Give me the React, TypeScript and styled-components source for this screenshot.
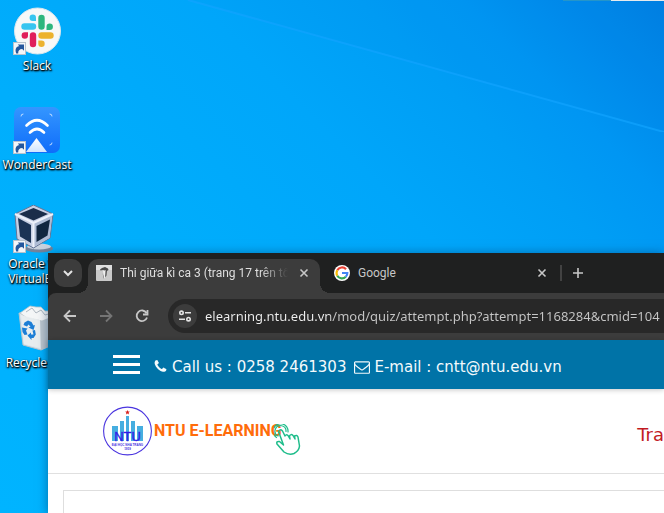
import React from "react";
import styled, { createGlobalStyle } from "styled-components";

const GlobalStyle = createGlobalStyle`
  *, *::before, *::after { box-sizing: border-box; }
  body { margin: 0; overflow: hidden; }
  button, input { font: inherit; border: 0; padding: 0; margin: 0; color: inherit; }
  svg { display: block; flex: none; }
`;

const uiFont = `"Open Sans", "Noto Sans", sans-serif`;

/* ---------- desktop ---------- */

const Desktop = styled.main`
  position: relative;
  min-height: 100vh;
  overflow: hidden;
  font-family: ${uiFont};
  background: linear-gradient(
    45deg,
    #00b4ff 0%,
    #00aefc 36%,
    #00a6fa 60%,
    #009ef5 74%,
    #0096f3 83%,
    #007fe2 100%
  );
`;

const Ray = styled.svg`
  position: absolute;
  top: 0;
  left: 0;
  width: 100%;
  height: 132px;
`;

const ScreenEdge = styled.div`
  position: absolute;
  top: 0;
  right: 0;
  width: 101px;
  height: 1px;
  background: linear-gradient(to right, #2595c9 48px, #e6eaed 48px);
`;

const IconColumn = styled.nav`
  position: relative;
  display: grid;
  width: 74px;
  padding-top: 7px;
  grid-auto-rows: 99px;
`;

const Shortcut = styled.button`
  display: flex;
  flex-direction: column;
  align-items: center;
  justify-content: flex-start;
  gap: 3px;
  background: none;
  color: #fff;
  font-size: 12px;
  line-height: 15px;
  text-shadow: 0 1px 2px #000, 1px 1px 2px #000, 1px 1px 1px rgba(0, 0, 0, 0.7);
`;

const ShortcutLabel = styled.span`
  white-space: pre;
`;

const LinkArrow = () => (
  <g>
    <rect x="0.500" y="35.500" width="12" height="12" fill="#f4f6f8" stroke="#b8c2cc" strokeWidth="1" />
    <path d="M3.200 46.500C1.500 42 3.500 39.300 6.300 39.300L4.800 37.500H11V43.700L9.200 42C6.500 42 5 43.500 5.200 46.500z" fill="#24579d" />
  </g>
);

const SlackIcon = () => (
  <svg width="48" height="48" viewBox="0 0 48 48">
    <circle cx="24.500" cy="24" r="23" fill="#f7f8f8" stroke="#d9e6ee" />
    <g strokeWidth="6.400" strokeLinecap="round" fill="none">
      <path d="M11.500 19.500h8.500" stroke="#36c5f0" />
      <path d="M28.500 11v8.500" stroke="#2eb67d" />
      <path d="M28.500 28.500h9" stroke="#ecb22e" />
      <path d="M20 28.500v8.500" stroke="#e01e5a" />
    </g>
    <path d="M23 14h-3.200a3.200 3.200 0 1 1 3.200-3.200z" fill="#36c5f0" />
    <path d="M33.500 23v-3.200a3.200 3.200 0 1 1 3.200 3.200z" fill="#2eb67d" />
    <path d="M25.300 33.500h3.200a3.200 3.200 0 1 1-3.200 3.200z" fill="#ecb22e" />
    <path d="M15 25.300v3.200a3.200 3.200 0 1 1-3.200-3.200z" fill="#e01e5a" />
    <LinkArrow />
  </svg>
);

const CastIcon = () => (
  <svg width="48" height="48" viewBox="0 0 48 48">
    <defs>
      <linearGradient id="castBg" x1="0" y1="0" x2="0" y2="1">
        <stop offset="0" stopColor="#3496ff" />
        <stop offset="1" stopColor="#0f6dfa" />
      </linearGradient>
      <linearGradient id="castBeam" x1="0" y1="0" x2="0" y2="1">
        <stop offset="0" stopColor="#fff" />
        <stop offset="1" stopColor="#cfe4ff" />
      </linearGradient>
    </defs>
    <rect x="1" y="1" width="46" height="46" rx="7" fill="url(#castBg)" />
    <g fill="none" stroke="#fff" strokeLinecap="round">
      <path d="M13.500 19.500Q24 9 34.500 19.500" strokeWidth="2.600" />
      <path d="M17 26.500Q24 19.500 31 26.500" strokeWidth="2.600" />
      <path d="M8 10q0-2 2-2M37 8q2 0 2 2M37 39q2 0 2-2" strokeWidth="1" opacity=".7" />
    </g>
    <path d="M23.500 32L34 46H13z" fill="url(#castBeam)" />
    <LinkArrow />
  </svg>
);

const CubeIcon = () => (
  <svg width="48" height="48" viewBox="0 0 48 48">
    <ellipse cx="26" cy="43.500" rx="14" ry="4" fill="#74839a" />
    <ellipse cx="26" cy="41.500" rx="12" ry="3" fill="#c9d2de" />
    <path d="M20.500 0L40 9L37 33L20.500 43L4 34L2 9z" fill="#c8d0e4" stroke="#647597" />
    <path d="M20.500 19L39 10L36.500 33L20.500 42z" fill="#adbbd4" />
    <path d="M20.500 3L35 9L20.500 15.500L6 9z" fill="#1b2d49" />
    <path d="M5 13L18 20V38L7 31.500z" fill="#1b3355" />
    <path d="M23.500 21L37 14.500L34.500 30.500L23.500 37z" fill="#10263f" />
    <path d="M2 9L20.500 18L40 9M20.500 18V42" fill="none" stroke="#edf1fa" strokeWidth="2" />
    <LinkArrow />
  </svg>
);

const BinIcon = () => (
  <svg width="48" height="48" viewBox="0 0 48 48">
    <path d="M6 9L42 9L37 42L28 46L10 41z" fill="#dce4ea" stroke="#b5c5cf" />
    <path d="M27 14L42 9L37 42L28 46z" fill="#bcc6ce" />
    <path d="M7 9l10-7 6 1 5 0 4 4 7 0 3 5-13 5-15-3z" fill="#f4f6f7" stroke="#b8c1c8" strokeWidth=".8" />
    <path d="M13 8l6-4 4 5 5-3 4 5 7-2" fill="none" stroke="#aeb8c1" />
    <path d="M8 11l19 5v28l-16-4z" fill="#e9edf0" opacity=".9" />
    <g fill="#1c7ed6">
      <path d="M11.500 18.500L15 16.500L18.500 18L20.500 21.500L22 21L20.500 26L15.500 23.500L17.500 22.700L15.500 20.500L14 22.500L10.500 21z" />
      <path d="M9 23.500L14.500 24.500L13 26.500L14.500 30.500L11.500 31L9.500 28z" />
      <path d="M19.500 26.500L22 26L22.800 30.500L20.500 34H18.500V36L14.500 31.500L18 28.500V30.500H20.500z" />
    </g>
  </svg>
);

const shortcuts = [
  { label: "Slack", Icon: SlackIcon },
  { label: "WonderCast", Icon: CastIcon },
  { label: "Oracle VM\nVirtualBox", Icon: CubeIcon },
  { label: "Recycle Bin", Icon: BinIcon },
];

/* ---------- browser window ---------- */

const Window = styled.section`
  position: absolute;
  top: 253px;
  left: 48px;
  right: 0;
  bottom: 0;
  display: flex;
  flex-direction: column;
  background: #fff;
  box-shadow: 0 1px 10px rgba(0, 40, 80, 0.5);
`;

const TabStrip = styled.div`
  display: flex;
  flex: none;
  height: 40px;
  padding: 6px 6px 0;
  background: #1f2020;
  color: #c7c7c7;
  font-family: Roboto, ${uiFont};
  font-size: 12px;
`;

const TabSearch = styled.button`
  display: grid;
  place-items: center;
  flex: none;
  width: 28px;
  height: 28px;
  margin-right: 6px;
  border-radius: 10px;
  background: #3c3c3c;
  color: #e3e3e3;
`;

const Tab = styled.div<{ $active?: boolean }>`
  position: relative;
  display: flex;
  align-items: center;
  flex: none;
  width: ${(p) => (p.$active ? 232 : 238)}px;
  height: 34px;
  padding: 0 8px 6px ${(p) => (p.$active ? 8 : 14)}px;
  border-radius: 10px 10px 0 0;
  background: ${(p) => (p.$active ? "#3c3c3c" : "transparent")};
  color: ${(p) => (p.$active ? "#dfdfdf" : "#c7c7c7")};

  &::before,
  &::after {
    content: "";
    display: ${(p) => (p.$active ? "block" : "none")};
    position: absolute;
    bottom: 0;
    width: 10px;
    height: 10px;
  }
  &::before {
    left: -10px;
    background: radial-gradient(circle at 0 0, transparent 10px, #3c3c3c 10px);
  }
  &::after {
    right: -10px;
    background: radial-gradient(circle at 100% 0, transparent 10px, #3c3c3c 10px);
  }
`;

const TabTitle = styled.span<{ $fade?: boolean }>`
  flex: 1;
  min-width: 0;
  margin: 0 8px;
  overflow: hidden;
  white-space: nowrap;
  line-height: 18px;
  mask-image: ${(p) => (p.$fade ? "linear-gradient(to right, #000 calc(100% - 28px), transparent)" : "none")};
`;

const GlyphButton = styled.button<{ $dim?: boolean }>`
  display: grid;
  place-items: center;
  flex: none;
  width: 16px;
  height: 16px;
  background: none;
  color: ${(p) => (p.$dim ? "#757575" : "#c7c7c7")};
`;

const NewTab = styled.div`
  display: flex;
  align-items: center;
  gap: 8px;
  height: 28px;
  margin-left: 2px;

  &::before {
    content: "";
    width: 2px;
    height: 16px;
    background: #424242;
  }
`;

const Toolbar = styled.div`
  flex: none;
  background: #1f2020;
`;

const ToolbarInner = styled.div`
  display: flex;
  align-items: center;
  height: 47px;
  padding: 0 0 1px 14px;
  gap: 18px;
  border-radius: 8px 0 0 0;
  background: #3c3c3c;
`;

const NavButtons = styled.div`
  display: flex;
  gap: 20px;
`;

const AddressBar = styled.label`
  display: flex;
  align-items: center;
  flex: 1;
  min-width: 0;
  height: 34px;
  padding-left: 5px;
  gap: 8px;
  border-radius: 17px 0 0 17px;
  background: #282828;
`;

const SiteInfo = styled.button`
  display: grid;
  place-items: center;
  flex: none;
  width: 24px;
  height: 24px;
  border-radius: 50%;
  background: #3c3c3c;
  color: #e3e3e3;
`;

const UrlInput = styled.input`
  flex: 1;
  min-width: 0;
  height: 24px;
  outline: none;
  font-family: "Noto Sans", sans-serif;
  font-size: 13px;
  color: transparent;
  background: linear-gradient(to right, #f0f0f0 125px, #c7c7c7 125px);
  background-clip: text;
  -webkit-background-clip: text;
`;

/* ---------- page ---------- */

const ContactBar = styled.div`
  position: relative;
  display: flex;
  align-items: center;
  flex: none;
  height: 49px;
  padding: 0 65px;
  background: #0073a7;
  box-shadow: 0 1px 5px rgba(0, 0, 0, 0.22);
  color: #f4fafc;
  font-family: Verdana, "DejaVu Sans", sans-serif;
  font-size: 15px;
  white-space: nowrap;
`;

const MenuButton = styled.button`
  display: flex;
  flex-direction: column;
  gap: 5px;
  flex: none;
  width: 27px;
  margin-right: 13px;
  background: none;
`;

const MenuBar = styled.span`
  height: 3px;
  background: #fff;
`;

const Contact = styled.span`
  display: flex;
  align-items: center;
  gap: 4px;
  padding-top: 4px;
  margin-right: 8px;
`;

const SiteHeader = styled.header`
  display: flex;
  align-items: center;
  justify-content: space-between;
  flex: none;
  height: 85px;
  padding-left: 55px;
  border-bottom: 1px solid #e0e0e0;
`;

const Brand = styled.a`
  display: flex;
  align-items: center;
  color: #ff6c0a;
  text-decoration: none;
`;

const BrandName = styled.span`
  margin-left: 2px;
  font: bold 16px/22px Roboto, "Liberation Sans", sans-serif;
  white-space: nowrap;
`;

const HandIcon = styled.svg`
  align-self: flex-end;
  margin-left: -8px;
`;

const NavLink = styled.a`
  padding-top: 8px;
  color: #c21a1f;
  font: 18px/22px Verdana, "DejaVu Sans", sans-serif;
  white-space: nowrap;
  text-decoration: none;
`;

const ContentBox = styled.article`
  flex: 1;
  margin: 16px 0 0 15px;
  border: solid #dedede;
  border-width: 1px 0 0 1px;
`;

const Stroke = ({ d, size = 16, width = 2 }: { d: string; size?: number; width?: number }) => (
  <svg width={size} height={size} viewBox="0 0 16 16" fill="none" stroke="currentColor" strokeWidth={width}>
    <path d={d} />
  </svg>
);

const PortraitFavicon = () => (
  <svg width="16" height="16" viewBox="0 0 16 16">
    <rect width="16" height="16" rx="1" fill="#c9c9c9" />
    <path d="M0 0h16v5H0z" fill="#dedede" />
    <path d="M4 4.500L6 3L9 2L12 3.500L12.500 5L10 6.500L7 5L4.500 5.500z" fill="#4a4a4a" />
    <path d="M7 5.500h3v4l-1 4-1-1z" fill="#f0f0f0" />
    <path d="M9.500 6h1.500l-.5 4.500-1.500 2zM6.500 8l1.500 4v2z" fill="#555" />
  </svg>
);

const GoogleIcon = () => (
  <svg width="16" height="16" viewBox="0 0 16 16">
    <circle cx="8" cy="8" r="8" fill="#fff" />
    <g fill="none" strokeWidth="2.200">
      <path d="M12 4.200A5.400 5.400 0 0 0 3.300 5.300" stroke="#ea4335" />
      <path d="M3.300 5.300a5.400 5.400 0 0 0 0 5.400" stroke="#fbbc05" />
      <path d="M3.300 10.700A5.400 5.400 0 0 0 11.800 11.800" stroke="#34a853" />
      <path d="M11.800 11.800A5.400 5.400 0 0 0 13.300 8H8" stroke="#4285f4" />
    </g>
  </svg>
);

const TuneIcon = () => (
  <svg width="14" height="14" viewBox="0 0 14 14" fill="none" stroke="currentColor" strokeWidth="1.600">
    <circle cx="3.500" cy="3.800" r="1.700" />
    <path d="M7 3.800h6M1 10.200h6" />
    <circle cx="10.500" cy="10.200" r="1.700" />
  </svg>
);

const PhoneIcon = () => (
  <svg width="15" height="15" viewBox="0 0 1792 1792" fill="currentColor">
    <path d="M1600 1240q0 27-10 70.500t-21 68.500q-21 50-122 106-94 51-186 51-27 0-53-3.500t-57.500-12.500-47-14.500-55.500-20.500-49-18q-98-35-175-83-127-79-264-216t-216-264q-48-77-83-175-3-9-18-49t-20.500-55.500-14.500-47-12.500-57.500-3.500-53q0-92 51-186 56-101 106-122 25-11 68.500-21t70.500-10q14 0 21 3 18 6 53 76 11 19 30 54t35 63.500 31 53.500q3 4 17.500 25t21.500 35.500 7 28.500q0 20-28.500 50t-62 55-62 53-28.500 46q0 9 5 22.500t8.500 20.500 14 24 11.500 19q76 137 174 235t235 174q2 1 19 11.500t24 14 20.500 8.500 22.500 5q18 0 46-28.500t53-62 55-62 50-28.500q14 0 28.500 7t35.500 21.500 25 17.500q25 15 53.500 31t63.500 35 54 30q70 35 76 53 3 7 3 21z" />
  </svg>
);

const MailIcon = () => (
  <svg width="16" height="16" viewBox="0 0 1792 1792" fill="currentColor">
    <path d="M1664 1504v-768q-32 36-69 66-268 206-426 338-51 43-83 67t-86.500 48.500-102.500 24.500h-2q-48 0-102.500-24.500t-86.500-48.500-83-67q-158-132-426-338-37-30-69-66v768q0 13 9.500 22.500t22.500 9.500h1472q13 0 22.500-9.500t9.500-22.500zm0-1051v-24.500l-.5-13-3-12.500-5.500-9-9-7.500-14-2.500h-1472q-13 0-22.500 9.500t-9.500 22.500q0 168 147 284 193 152 401 317 6 5 35 29.500t46 37.500 44.500 31.500 50.500 27.500 43 9h2q20 0 43-9t50.500-27.500 44.500-31.500 46-37.500 35-29.500q208-165 401-317 54-43 100.500-115.500t46.500-131.500zm128-37v1088q0 66-47 113t-113 47h-1472q-66 0-113-47t-47-113v-1088q0-66 47-113t113-47h1472q66 0 113 47t47 113z" />
  </svg>
);

const Emblem = () => (
  <svg width="49" height="50" viewBox="0 0 49 50">
    <circle cx="24.500" cy="25" r="23.900" fill="#fff" stroke="#4a35df" strokeWidth="1.100" />
    <path d="M24.500 4l.7 1.500 1.600.1-1.200 1.100.4 1.700-1.500-.9-1.500.9.400-1.700-1.200-1.100 1.600-.1z" fill="#d8201c" />
    <path d="M9 20h6v15H9zM17 15h4v20h-4zM23 10h3v25h-3zM28 15h4v20h-4zM34 20h6v15h-6z" fill="#46aee0" />
    <text x="24.500" y="34.500" textAnchor="middle" fontFamily="Liberation Sans, sans-serif" fontSize="13" fill="#3418e8" stroke="#3418e8" strokeWidth=".3">NTU</text>
    <text x="24.500" y="39.500" textAnchor="middle" fontFamily="Liberation Sans, sans-serif" fontSize="3" fontWeight="bold" fill="#4a35df">ĐẠI HỌC NHA TRANG</text>
    <text x="24.500" y="44" textAnchor="middle" fontFamily="Liberation Sans, sans-serif" fontSize="3" fontWeight="bold" fill="#4a35df">1959</text>
  </svg>
);

export default function App() {
  return (
    <Desktop>
      <GlobalStyle />
      <Ray viewBox="0 0 664 132" preserveAspectRatio="none" aria-hidden="true">
        <path d="M188 0H664V132z" fill="#0072dc" opacity=".06" />
        <path d="M188 0L664 132" stroke="#12a4ff" strokeWidth="2" opacity=".7" />
      </Ray>
      <ScreenEdge />
      <IconColumn aria-label="Desktop shortcuts">
        {shortcuts.map(({ label, Icon }) => (
          <Shortcut key={label} type="button">
            <Icon />
            <ShortcutLabel>{label}</ShortcutLabel>
          </Shortcut>
        ))}
      </IconColumn>
      <Window>
        <TabStrip>
          <TabSearch type="button" aria-label="Search tabs">
            <Stroke d="M4 6l4 4 4-4" />
          </TabSearch>
          <Tab $active>
            <PortraitFavicon />
            <TabTitle $fade>Thi giữa kì ca 3 (trang 17 trên tổ</TabTitle>
            <GlyphButton type="button" aria-label="Close tab">
              <Stroke d="M4.500 4.500l7 7M11.500 4.500l-7 7" width={1.6} />
            </GlyphButton>
          </Tab>
          <Tab>
            <GoogleIcon />
            <TabTitle>Google</TabTitle>
            <GlyphButton type="button" aria-label="Close tab">
              <Stroke d="M4.500 4.500l7 7M11.500 4.500l-7 7" width={1.6} />
            </GlyphButton>
          </Tab>
          <NewTab>
            <GlyphButton type="button" aria-label="New tab">
              <Stroke d="M8 3v10M3 8h10" width={1.6} />
            </GlyphButton>
          </NewTab>
        </TabStrip>
        <Toolbar>
          <ToolbarInner>
            <NavButtons>
              <GlyphButton type="button" aria-label="Back">
                <Stroke d="M14 8H3M8 2.500L2.500 8L8 13.500" width={1.8} />
              </GlyphButton>
              <GlyphButton type="button" aria-label="Forward" $dim>
                <Stroke d="M2 8h11M8 2.500L13.500 8L8 13.500" width={1.8} />
              </GlyphButton>
              <GlyphButton type="button" aria-label="Reload">
                <Stroke d="M13 9.500A5.300 5.300 0 1 1 12.500 5M13.500 2v4.500H9" width={1.8} />
              </GlyphButton>
            </NavButtons>
            <AddressBar>
              <SiteInfo type="button" aria-label="View site information">
                <TuneIcon />
              </SiteInfo>
              <UrlInput
                type="text"
                aria-label="Address"
                defaultValue="elearning.ntu.edu.vn/mod/quiz/attempt.php?attempt=1168284&cmid=104"
              />
            </AddressBar>
          </ToolbarInner>
        </Toolbar>
        <ContactBar>
          <MenuButton type="button" aria-label="Menu">
            <MenuBar />
            <MenuBar />
            <MenuBar />
          </MenuButton>
          <Contact>
            <PhoneIcon />
            Call us : 0258 2461303
          </Contact>
          <Contact>
            <MailIcon />
            E-mail : cntt@ntu.edu.vn
          </Contact>
        </ContactBar>
        <SiteHeader>
          <Brand href="#">
            <Emblem />
            <BrandName>NTU E-LEARNING</BrandName>
            <HandIcon width="30" height="32" viewBox="0 0 30 32" fill="none" stroke="#1fbd8b" strokeWidth="1.500" strokeLinejoin="round" strokeLinecap="round" aria-hidden="true">
              <path d="M9.500 21L5.500 17.500Q2 17 3 20L10 28Q15 31.500 20 29.500Q25 27 25.500 22L24 13Q23 10.500 20.500 12L21 15L19 11.500Q17 9.500 15.500 12L16 15L14 11.500Q12 10 11 12L8.500 7Q6 4.500 4.500 7.500z" />
              <path d="M4 12A5.500 5.500 0 1 1 12 7.500M2.500 13.500A7.500 7.500 0 1 1 14 8" strokeWidth="1.200" />
            </HandIcon>
          </Brand>
          <NavLink href="#">Tra</NavLink>
        </SiteHeader>
        <ContentBox />
      </Window>
    </Desktop>
  );
}
